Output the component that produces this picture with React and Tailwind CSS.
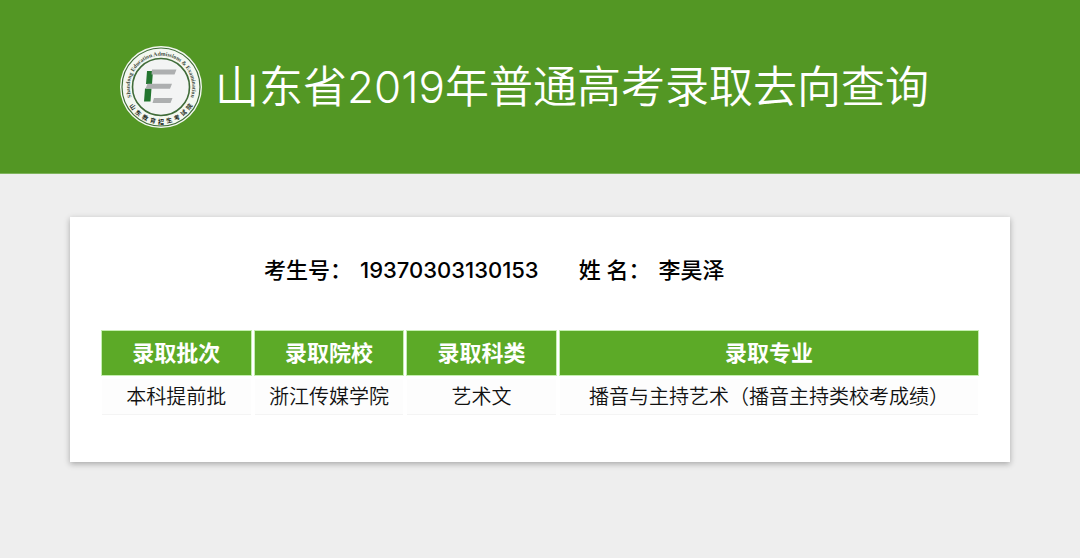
const columns = [
  { title: '录取批次', value: '本科提前批', width: 'w-[17.2%]' },
  { title: '录取院校', value: '浙江传媒学院', width: 'w-[17.2%]' },
  { title: '录取科类', value: '艺术文', width: 'w-[17.2%]' },
  { title: '录取专业', value: '播音与主持艺术（播音主持类校考成绩）', width: 'w-auto' },
];

export default function App() {
  return (
    <div className="min-h-screen bg-[#eeeeee] pb-8 font-['Inter','Noto_Sans_CJK_SC',sans-serif] text-black">
      <header className="flex h-[174px] items-center gap-3 border-b border-[#7fb45c] bg-[#539724] pl-[119px]">
        <Logo />
        <h1 className="whitespace-nowrap text-[44px] leading-[56px] font-[350] text-white">
          山东省2019年普通高考录取去向查询
        </h1>
      </header>

      <main className="mx-[70px] mt-[43px] bg-white px-7 pt-9 pb-[43px] shadow-[0_2px_6px_rgba(0,0,0,0.3)]">
        <dl className="flex gap-10 pl-[166px] text-[22px] leading-[34px] font-medium whitespace-nowrap">
          <div className="flex gap-2">
            <dt>考生号：</dt>
            <dd>19370303130153</dd>
          </div>
          <div className="flex gap-2">
            <dt>姓 名：</dt>
            <dd>李昊泽</dd>
          </div>
        </dl>

        <table className="mt-10 w-full table-fixed border-separate border-spacing-1 text-center">
          <thead>
            <tr>
              {columns.map(col => (
                <th
                  key={col.title}
                  className={`${col.width} h-11 bg-[#5caa27] text-[22px] leading-8 font-bold text-white outline-1 outline-[#c5efb0]`}
                >
                  {col.title}
                </th>
              ))}
            </tr>
          </thead>
          <tbody>
            <tr>
              {columns.map(col => (
                <td key={col.title} className="h-9 border-b border-[#f4f4f4] bg-[#fdfdfd] text-xl leading-8 font-[350] text-[#111111]">
                  {col.value}
                </td>
              ))}
            </tr>
          </tbody>
        </table>
      </main>
    </div>
  );
}

function Logo() {
  return (
    <svg viewBox="0 0 84 84" className="size-[84px] shrink-0" role="img">
      <defs>
        <path id="arc-top" d="M 16.1 59.5 A 31.3 31.3 0 1 1 67.9 59.5" />
        <path id="arc-bottom" d="M 5.3 42 A 36.7 36.7 0 0 0 78.7 42" />
      </defs>
      <circle cx="42" cy="42" r="41" fill="#f4f8f1" />
      <circle cx="42" cy="42" r="39" fill="none" stroke="#3f6b38" strokeWidth="1.2" />
      <circle cx="42" cy="42" r="28.5" fill="#f3f4f4" stroke="#3f6b38" strokeWidth="1.6" />
      <text fontSize="5.7" fontWeight="700" fill="#3c4a3c" fontFamily="Liberation Serif, serif">
        <textPath href="#arc-top" startOffset="50%" textAnchor="middle">
          Shandong Education Admissions &amp; Examination
        </textPath>
      </text>
      <text fontSize="6" fontWeight="700" fill="#222b22" fontFamily="Noto Sans CJK SC, sans-serif">
        <textPath href="#arc-bottom" startOffset="50%" textAnchor="middle">
          山 &#160;东 &#160;教 &#160;育 &#160;招 &#160;生 &#160;考 &#160;试 &#160;院
        </textPath>
      </text>
      <path d="M28 26 h6 l-1 13 h-6 z M26 43.5 h6.5 l-1 13 h-6.5 z" fill="#23752f" />
      <path d="M33 24.5 h24.5 l-2 5 h-23 z M28.5 38.8 h24.5 l-2 5 h-24.5 z M35 53 h18.5 l-2 5 h-18 z" fill="#adafb0" />
    </svg>
  );
}
